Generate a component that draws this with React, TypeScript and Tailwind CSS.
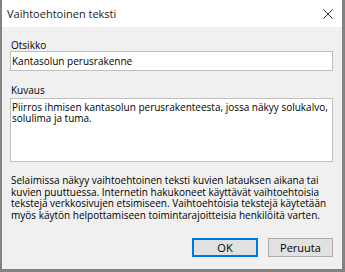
export default function App() {
  return (
    <div
      className="flex h-[272px] w-[345px] flex-col overflow-hidden border-b-[3px] border-l-2 border-r-[3px] border-[#828282] bg-[#f0f0f0] text-[#000]"
      style={{ fontFamily: '"Open Sans", "Noto Sans", sans-serif' }}
    >
      {/* Title bar */}
      <div className="flex h-[27px] shrink-0 items-center justify-between bg-white pl-[5px] pr-[8px]">
        <span className="text-[11px] leading-none text-[#1a1a1a]">Vaihtoehtoinen teksti</span>
        <svg width="10" height="10" viewBox="0 0 10 10" className="mr-[1px]">
          <path d="M0.5 0.5 L9.5 9.5 M9.5 0.5 L0.5 9.5" stroke="#333" strokeWidth="1" />
        </svg>
      </div>

      {/* Body */}
      <div className="flex flex-1 flex-col pl-[8px] pr-[9px] pt-[12px]">
        <label className="pl-[1px] text-[10px] leading-[12px]">Otsikko</label>
        <div className="h-[20px] border border-[#bfbfbf] bg-white px-[1px] text-[10px] leading-[18px]">
          Kantasolun perusrakenne
        </div>

        <label className="mt-[13px] pl-[1px] text-[10px] leading-[12px]">Kuvaus</label>
        <div className="mt-[2px] h-[64px] border border-[#bfbfbf] bg-white px-[1px] pt-[3px] text-[10px] leading-[11px]">
          Piirros ihmisen kantasolun perusrakenteesta, jossa näkyy solukalvo, solulima ja tuma.
        </div>

        <p className="mt-[13px] pl-[1px] text-[10px] leading-[11.6px]">
          Selaimissa näkyy vaihtoehtoinen teksti kuvien latauksen aikana tai kuvien puuttuessa. Internetin
          hakukoneet käyttävät vaihtoehtoisia tekstejä verkkosivujen etsimiseen. Vaihtoehtoisia tekstejä
          käytetään myös käytön helpottamiseen toimintarajoitteisia henkilöitä varten.
        </p>

        <div className="mt-auto mb-[12px] flex justify-end gap-[10px]">
          <button className="h-[19px] w-[66px] border-2 border-[#0078d7] bg-[#e1e1e1] text-[11px] leading-none">
            OK
          </button>
          <button className="h-[19px] w-[65px] border border-[#adadad] bg-[#e1e1e1] text-[11px] leading-none">
            Peruuta
          </button>
        </div>
      </div>
    </div>
  );
}
